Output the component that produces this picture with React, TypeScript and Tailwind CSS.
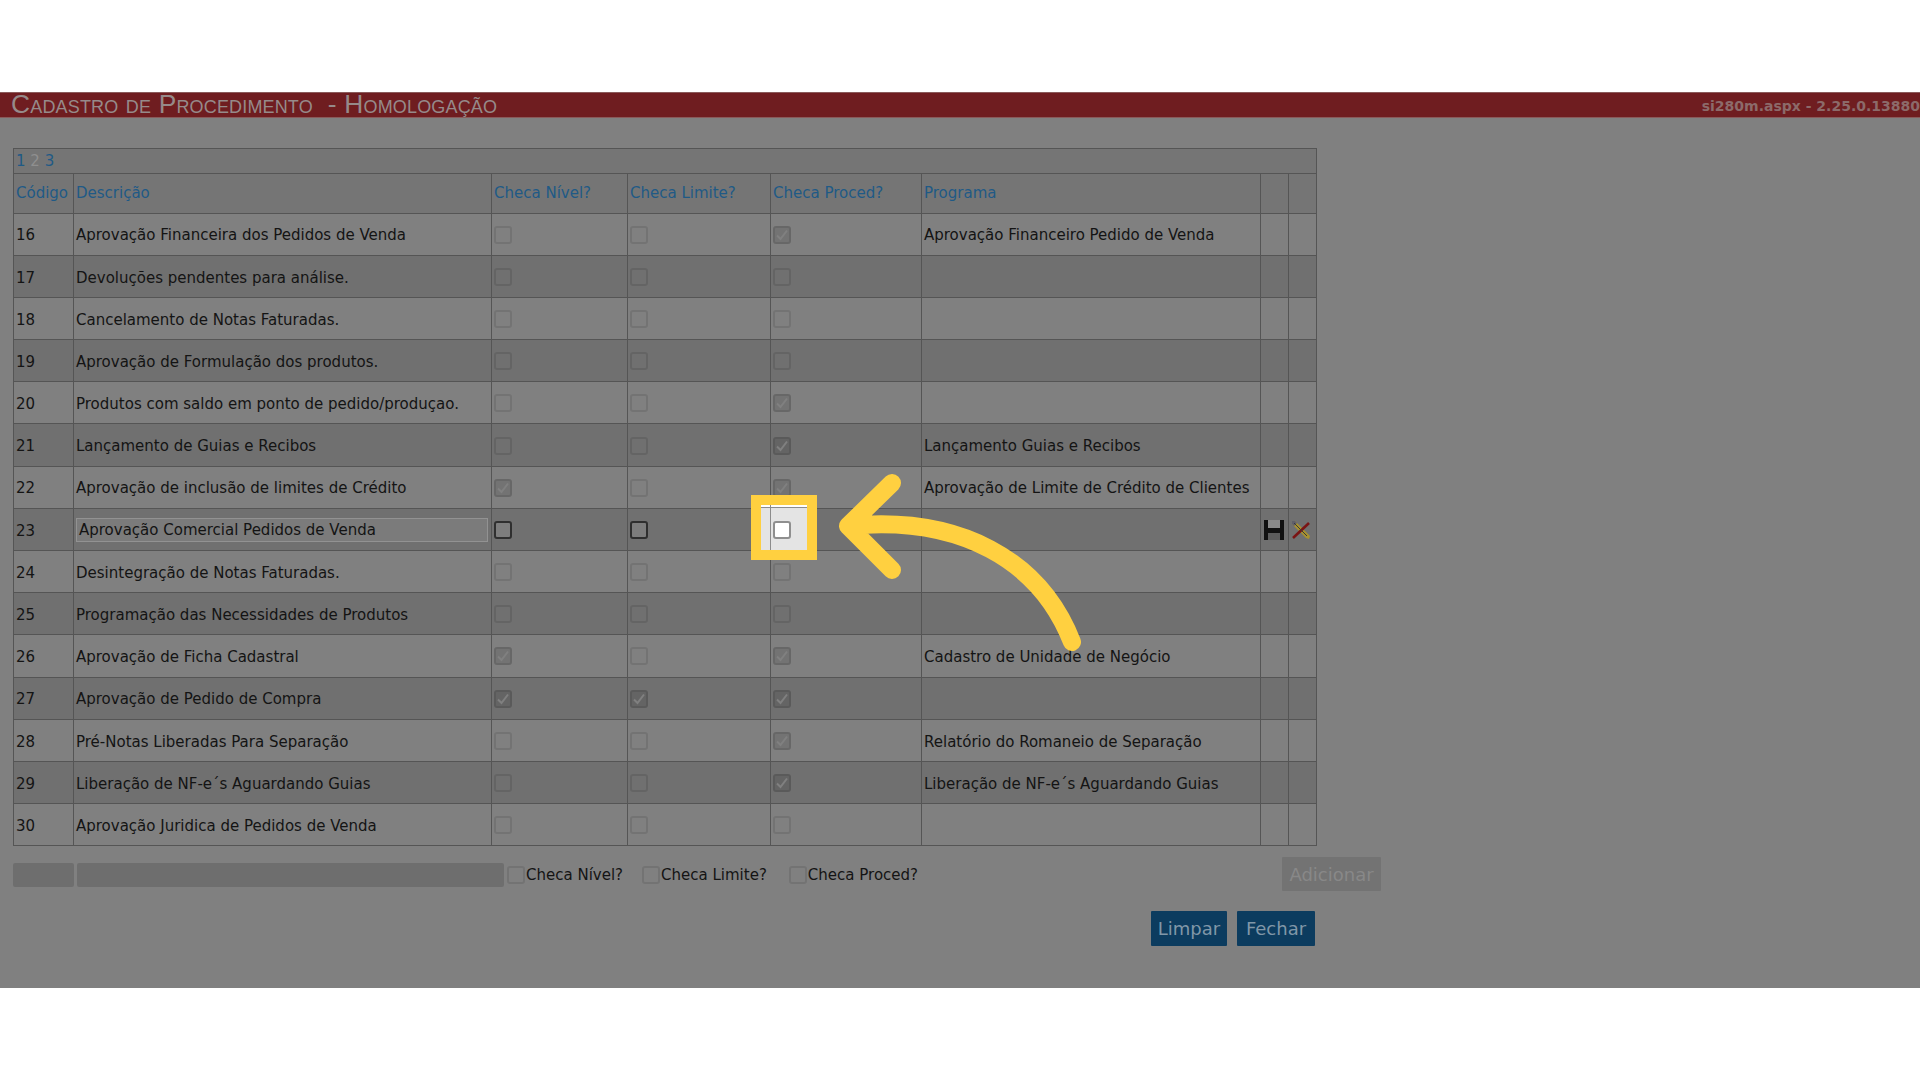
import React from 'react';

type Row = {
  code: number;
  desc: string;
  nivel?: boolean;
  limite?: boolean;
  proced?: boolean;
  programa?: string;
  editing?: boolean;
};

const rows: Row[] = [
  { code: 16, desc: 'Aprovação Financeira dos Pedidos de Venda', proced: true, programa: 'Aprovação Financeiro Pedido de Venda' },
  { code: 17, desc: 'Devoluções pendentes para análise.' },
  { code: 18, desc: 'Cancelamento de Notas Faturadas.' },
  { code: 19, desc: 'Aprovação de Formulação dos produtos.' },
  { code: 20, desc: 'Produtos com saldo em ponto de pedido/produçao.', proced: true },
  { code: 21, desc: 'Lançamento de Guias e Recibos', proced: true, programa: 'Lançamento Guias e Recibos' },
  { code: 22, desc: 'Aprovação de inclusão de limites de Crédito', nivel: true, proced: true, programa: 'Aprovação de Limite de Crédito de Clientes' },
  { code: 23, desc: 'Aprovação Comercial Pedidos de Venda', editing: true },
  { code: 24, desc: 'Desintegração de Notas Faturadas.' },
  { code: 25, desc: 'Programação das Necessidades de Produtos' },
  { code: 26, desc: 'Aprovação de Ficha Cadastral', nivel: true, proced: true, programa: 'Cadastro de Unidade de Negócio' },
  { code: 27, desc: 'Aprovação de Pedido de Compra', nivel: true, limite: true, proced: true },
  { code: 28, desc: 'Pré-Notas Liberadas Para Separação', proced: true, programa: 'Relatório do Romaneio de Separação' },
  { code: 29, desc: 'Liberação de NF-e´s Aguardando Guias', proced: true, programa: 'Liberação de NF-e´s Aguardando Guias' },
  { code: 30, desc: 'Aprovação Juridica de Pedidos de Venda' },
];

const Check = ({ checked, active }: { checked?: boolean; active?: boolean }) => (
  <span
    className={`flex h-[18px] w-[18px] items-center justify-center rounded-[3px] border-2 ${
      active ? 'border-[#2f2f2f] bg-[#7d7d7d]' : checked ? 'border-black/10 bg-black/10' : 'border-black/10'
    }`}
  >
    {checked && (
      <svg viewBox="0 0 14 14" className="h-[14px] w-[14px]" fill="none" stroke="#808080" strokeWidth="2">
        <path d="M2 7.5 L5.5 11 L12 2.5" />
      </svg>
    )}
  </span>
);

const FloppyIcon = () => (
  <svg viewBox="0 0 20 20" className="h-5 w-5">
    <path d="M0 0h4v8h12V0h4v20h-4v-7H4v7H0z" fill="#111" />
    <rect x="4" y="0" width="12" height="8" fill="#8a8a8a" />
    <rect x="4" y="13" width="12" height="7" fill="#5c5c5c" />
  </svg>
);

const PencilXIcon = () => (
  <svg viewBox="0 0 20 20" className="h-5 w-5">
    <path d="M1 1 L4 1 L19 16 L18 19 L15 18 L1 4 Z" fill="#a8912f" />
    <path d="M1 1 L4 1 L6 3 L3 6 L1 4 Z" fill="#5f5f6b" />
    <path d="M2 18 L18 3" stroke="#7a1414" strokeWidth="2.6" />
    <path d="M3 3 L16 16" stroke="#3a3a3a" strokeWidth="1" />
  </svg>
);

const th = 'border border-[#555] px-[2px] pt-[1px] text-left font-normal text-[#1f5a86]';
const td = 'border border-[#555] px-[2px] pt-[3px] text-[#141414]';
const checkTd = 'border border-[#555] px-[2px] pt-[1px]';

const App = () => {
  return (
    <div className="relative h-[1080px] w-[1920px] overflow-hidden bg-white font-['DejaVu_Sans',sans-serif] text-[15px]">
      <div className="h-[92px]" />
      <div className="h-[896px] bg-[#808080]">
        <div className="flex h-[26px] items-center justify-between border-y border-[#8a5a5a] bg-[#6f1d20] pl-[11px]">
          <span className="mt-[-3px] whitespace-pre font-['Liberation_Sans',sans-serif] text-[26.4px] leading-[24px] tracking-[0.16px] text-[#968a8a] [font-variant:small-caps]">
            Cadastro de Procedimento  - Homologação
          </span>
          <span className="pt-[2px] text-[14px] font-bold text-[#8c6a6a]">si280m.aspx - 2.25.0.13880</span>
        </div>

        <div className="pl-[13px] pt-[30px]">
          <table className="w-[1303px] table-fixed border-collapse">
            <colgroup>
              <col className="w-[60px]" />
              <col className="w-[418px]" />
              <col className="w-[136px]" />
              <col className="w-[143px]" />
              <col className="w-[151px]" />
              <col className="w-[339px]" />
              <col className="w-[28px]" />
              <col className="w-[28px]" />
            </colgroup>
            <thead>
              <tr className="h-[23px] bg-[#757575]">
                <td colSpan={8} className="border border-[#555] px-[2px] pt-[1px] text-[#1f5a86]">
                  <span>1</span> <span className="text-[#8f8f8f]">2</span> <span>3</span>
                </td>
              </tr>
              <tr className="h-[40px] bg-[#757575]">
                <th className={th}>Código</th>
                <th className={th}>Descrição</th>
                <th className={th}>Checa Nível?</th>
                <th className={th}>Checa Limite?</th>
                <th className={th}>Checa Proced?</th>
                <th className={th}>Programa</th>
                <th className={th} />
                <th className={th} />
              </tr>
            </thead>
            <tbody>
              {rows.map((r, i) => (
                <tr key={r.code} className={`h-[42.2px] ${i % 2 === 0 ? 'bg-[#808080]' : 'bg-[#707070]'}`}>
                  <td className={td}>{r.code}</td>
                  <td className={r.editing ? 'border border-[#555] px-[2px] pt-[1px] text-[#141414]' : td}>
                    {r.editing ? (
                      <div className="flex h-[24px] w-[412px] items-center border border-[#929292] bg-[#7b7b7b] px-[2px]">{r.desc}</div>
                    ) : (
                      r.desc
                    )}
                  </td>
                  <td className={checkTd}>
                    <Check checked={r.nivel} active={r.editing} />
                  </td>
                  <td className={checkTd}>
                    <Check checked={r.limite} active={r.editing} />
                  </td>
                  <td className={checkTd}>
                    <Check checked={r.proced} />
                  </td>
                  <td className={td}>{r.programa}</td>
                  <td className="border border-[#555] pt-[1px]">
                    {r.editing && <div className="flex justify-start pl-[3px]"><FloppyIcon /></div>}
                  </td>
                  <td className="border border-[#555] pt-[1px]">
                    {r.editing && <div className="flex justify-start pl-[2px]"><PencilXIcon /></div>}
                  </td>
                </tr>
              ))}
            </tbody>
          </table>

          <div className="mt-[11px] flex h-[36px] items-center text-[#141414]">
            <div className="h-[24px] w-[61px] rounded-[2px] bg-[#6e6e6e]" />
            <div className="ml-[3px] h-[24px] w-[427px] rounded-[2px] bg-[#6e6e6e]" />
            <div className="ml-[3px]"><Check /></div>
            <span className="ml-[1px]">Checa Nível?</span>
            <div className="ml-[19px]"><Check /></div>
            <span className="ml-[1px]">Checa Limite?</span>
            <div className="ml-[22px]"><Check /></div>
            <span className="ml-[1px]">Checa Proced?</span>
            <button className="ml-auto mr-[539px] h-[34px] w-[99px] self-start rounded-[1px] bg-[#737373] text-[18px] text-[#888]">Adicionar</button>
          </div>

          <div className="mt-[18px] flex w-[1302px] justify-end gap-[10px]">
            <button className="h-[35px] w-[76px] rounded-[1px] bg-[#0c3c5f] text-[18px] text-[#8097a8]">Limpar</button>
            <button className="h-[35px] w-[78px] rounded-[1px] bg-[#0c3c5f] text-[18px] text-[#8097a8]">Fechar</button>
          </div>
        </div>
      </div>

      {/* highlight box over the Checa Proced cell of row 23 */}
      <div className="absolute left-[751px] top-[495px] h-[65px] w-[66px] border-[10px] border-[#ffd040] bg-[#e4e4e4]">
        <div className="h-[2px] bg-white" />
        <div className="h-[1px] bg-[#8c8c8c]" />
        <div className="absolute bottom-0 left-[9px] top-0 w-[1px] bg-[#8c8c8c]" />
        <div className="absolute left-[12px] top-[16px] h-[18px] w-[18px] rounded-[3px] border-2 border-[#8f8f8f] bg-white" />
      </div>

      {/* arrow annotation */}
      <svg className="absolute left-0 top-0 h-[1080px] w-[1920px]" viewBox="0 0 1920 1080" fill="none">
        <path
          d="M892 483 L848 526 L892 570 M848 526 C960 515 1040 560 1072 642"
          stroke="#ffd040"
          strokeWidth="18"
          strokeLinecap="round"
          strokeLinejoin="round"
        />
      </svg>
    </div>
  );
};

export default App;
